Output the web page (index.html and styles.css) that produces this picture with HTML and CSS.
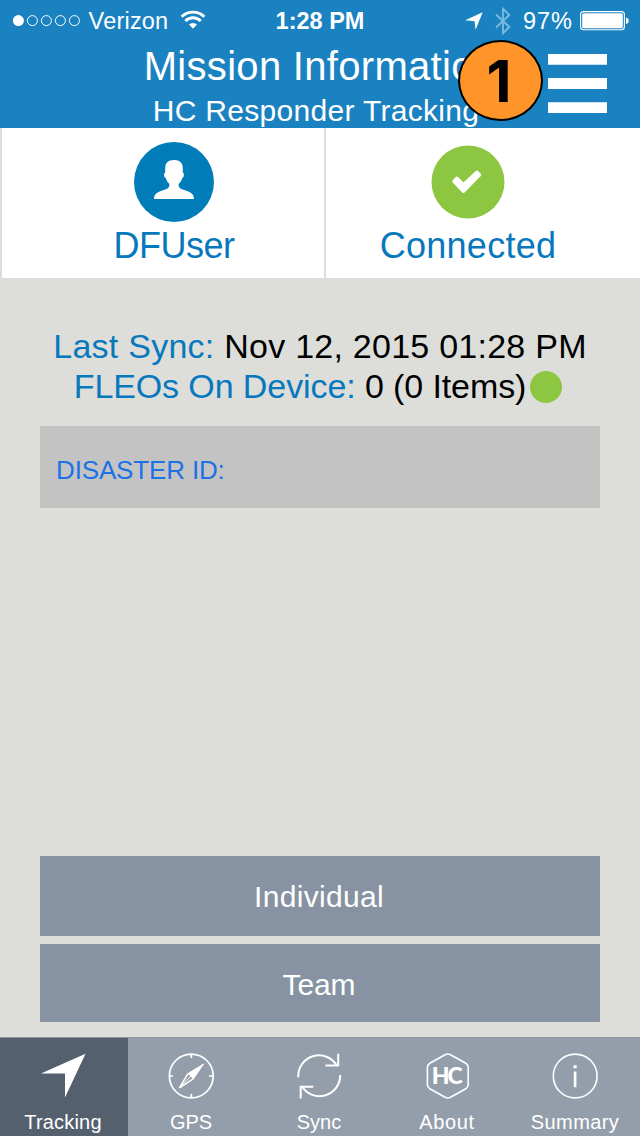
FILE: index.html
```html
<!DOCTYPE html>
<html lang="en">
<head>
<meta charset="utf-8">
<title>Mission Information</title>
<link rel="stylesheet" href="styles.css">
</head>
<body>
<div class="screen">
  <header class="header">
    <div class="status">
      <div class="status-left">
        <svg class="signal" width="70" height="14" viewBox="0 0 70 14"><circle cx="6.4" cy="6.600" r="5.5" fill="#fff"/><g fill="none" stroke="#fff" stroke-width="1"><circle cx="20.4" cy="6.600" r="5"/><circle cx="34.4" cy="6.600" r="5"/><circle cx="48.4" cy="6.600" r="5"/><circle cx="62.4" cy="6.600" r="5"/></g></svg>
        <span class="carrier">Verizon</span>
        <svg class="wifi" width="26" height="20" viewBox="0 0 26 20"><g fill="none" stroke="#fff" stroke-width="2.800"><path d="M1.6 6.800a16.2 16.2 0 0 1 22.8 0"/><path d="M5.3 11a10.800 10.800 0 0 1 15.400 0"/></g><path d="M13 18.800l-4-4.200a5.8 5.8 0 0 1 8 0z" fill="#fff"/></svg>
      </div>
      <span class="clock">1:28 PM</span>
      <div class="status-right">
        <svg class="arrow" width="18" height="18" viewBox="0 0 18 18"><path d="M17.7.3L.2 8.2l9.400 1 1 8.500z" fill="#fff"/></svg>
        <svg class="bluetooth" width="16" height="28" viewBox="0 0 16 28"><path d="M1 7.5L14.3 20 8 26.2V1.8L14.3 8 1 20.5" fill="none" stroke="#7ab8de" stroke-width="1.9"/></svg>
        <span class="percent">97%</span>
        <svg class="battery" width="50" height="20" viewBox="0 0 50 20"><rect x=".6" y=".6" width="43.8" height="18.2" rx="3" fill="none" stroke="#fff" stroke-width="1.1"/><rect x="2.2" y="2.2" width="40.6" height="15" rx="1.5" fill="#fff"/><path d="M46 6.5c3.7.8 3.7 5.7 0 6.5z" fill="#fff"/></svg>
      </div>
    </div>
    <h1 class="title">Mission Information</h1>
    <p class="subtitle">HC Responder Tracking</p>
    <svg class="menu" width="59" height="60" viewBox="0 0 59 60"><path d="M0 0h59v10.7H0zM0 24h59v11H0zM0 48.2h59v10.7H0z" fill="#fff"/></svg>
    <div class="badge">1</div>
  </header>

  <section class="cards">
    <div class="card card-user">
      <svg class="card-icon" width="80" height="80" viewBox="0 0 80 80"><circle cx="40" cy="40" r="40" fill="#007db8"/><path d="M40 18C34 18 31.200 21 31.200 26V30.500C29.500 31 29.800 35.500 31.800 36C32.400 38.500 33.500 40.300 35.200 41.800C35.800 44.500 35 46 32 47.200C26 49.500 20 50 20 57H60C60 50 54 49.500 48 47.200C45 46 44.200 44.500 44.800 41.800C46.500 40.300 47.600 38.500 48.200 36C50.200 35.500 50.500 31 48.800 30.500V26C48.800 21 46 18 40 18Z" fill="#fff"/></svg>
      <span class="card-label user-label">DFUser</span>
    </div>
    <div class="card card-link">
      <svg class="card-icon" width="80" height="80" viewBox="0 0 80 80"><circle cx="40" cy="40" r="36.500" fill="#8dc741"/><path d="M24.700 38.200l3.100-3.100q1.200-1 2.400 0l5.200 5.300L47.700 29q1.200-1 2.400 0l2.700 2.900q.9 1.100 0 2.200L36.600 50.400q-1.200 1-2.400 0L24.700 40.400q-.9-1.100 0-2.200z" fill="#fff"/></svg>
      <span class="card-label link-label">Connected</span>
    </div>
  </section>

  <main class="main">
    <div class="info sync"><span class="key">Last Sync:</span> Nov 12, 2015 01:28 PM</div>
    <div class="info device"><span class="key">FLEOs On Device:</span> 0 (0 Items)<i class="dot"></i></div>
    <div class="disaster">DISASTER ID:</div>
    <div class="actions">
      <button class="action individual">Individual</button>
      <button class="action team">Team</button>
    </div>
  </main>

  <nav class="tabs">
    <a class="tab active">
      <svg width="46" height="46" viewBox="0 0 46 46"><path d="M45.500 .8L1 20.600h24V44.500z" fill="#fff"/></svg>
      <span class="tracking">Tracking</span>
    </a>
    <a class="tab">
      <svg width="46" height="46" viewBox="0 0 46 46" fill="none" stroke="#fff" stroke-width="1.700"><circle cx="23.300" cy="23" r="21.900"/><path d="M23.300 1v4M23.300 41v4M1 23h4M41 23h4"/><path d="M35.500 11L20 20.500l5.600 5.200z" fill="#fff" stroke-width="1"/><path d="M20 20.500L11.500 34.800l14.100-9.100" stroke-width="1.500"/><path d="M11.500 34.800L23 23" stroke-width="1"/></svg>
      <span class="gps">GPS</span>
    </a>
    <a class="tab">
      <svg width="46" height="46" viewBox="0 0 46 46" fill="none" stroke="#fff" stroke-width="2"><path d="M2.300 24.300A20.700 20.700 0 0 1 40.800 12.500M44.200 22A20.700 20.700 0 0 1 6 33.500"/><path d="M42.200 .8v11.600H29.500M4.700 45.500V33.800H17.300"/></svg>
      <span class="sync-tab">Sync</span>
    </a>
    <a class="tab">
      <svg width="46" height="46" viewBox="0 0 46 46"><path d="M21.100 1.700q2.700-1.400 5.400 0l15.300 8.500q2.400 1.400 2.400 4v17.600q0 2.600-2.400 4l-15.300 8.500q-2.700 1.400-5.400 0L5.800 35.800q-2.400-1.400-2.400-4V14.200q0-2.600 2.400-4z" fill="none" stroke="#fff" stroke-width="1.600"/><text class="logo" x="7.700" y="31.400" textLength="31">HC</text></svg>
      <span class="about">About</span>
    </a>
    <a class="tab">
      <svg width="46" height="46" viewBox="0 0 46 46"><circle cx="23.200" cy="23" r="21.900" fill="none" stroke="#fff" stroke-width="1.600"/><path d="M21.500 12.200h3.200v3h-3.200zM21.800 18.500h2.600v15.700h-2.600z" fill="#fff"/></svg>
      <span class="summary">Summary</span>
    </a>
  </nav>
</div>
</body>
</html>
```
FILE: styles.css
```css
* { box-sizing: border-box; }
body {
  margin: 0;
  font-family: "Liberation Sans", Arial, sans-serif;
}
svg { display: block; flex: none; }
.screen {
  width: 640px;
  height: 1136px;
  display: flex;
  flex-direction: column;
  background: #dddeda;
  overflow: hidden;
}

/* Header */
.header {
  position: relative;
  height: 128px;
  flex: none;
  background: #1a82c1;
  color: #fff;
  text-align: center;
}
.status {
  display: grid;
  grid-template-columns: 1fr auto 1fr;
  height: 42px;
  font-size: 24px;
  line-height: 42px;
}
.status-left, .status-right { display: flex; align-items: flex-start; }
.status-left { padding-left: 12px; }
.status-right { justify-content: flex-end; padding-right: 10px; }
.signal { margin-top: 14px; }
.carrier { margin-left: 6px; width: 81px; font-size: 23.5px; letter-spacing: 0.2px; white-space: nowrap; }
.wifi { margin: 10px 0 0 10.5px; }
.clock { font-weight: bold; font-size: 23.5px; }
.arrow { margin: 12px 12px 0 0; }
.bluetooth { margin: 7px 12px 0 0; }
.percent { font-size: 23.5px; letter-spacing: 1px; margin-right: 7px; }
.battery { margin-top: 11px; }
.title {
  margin: 0;
  font-size: 40px;
  line-height: 49px;
  font-weight: normal;
  letter-spacing: 0.3px;
}
.subtitle {
  margin: 0;
  font-size: 30px;
  line-height: 40px;
  letter-spacing: 0.3px;
  padding-right: 8px;
}
.menu { position: absolute; left: 548px; top: 54px; }
.badge {
  position: absolute;
  left: 458px;
  top: 40px;
  width: 85px;
  height: 81px;
  border: 2px solid #000;
  border-radius: 50%;
  background: #ff9528;
  color: #000;
  font-family: Inter, "Liberation Sans", sans-serif;
  font-size: 58px;
  line-height: 78px;
  font-weight: bold;
  padding-right: 3px;
}

/* User and connection cards */
.cards {
  display: grid;
  grid-template-columns: 324px 1fr;
  height: 150px;
  flex: none;
}
.card {
  display: flex;
  flex-direction: column;
  align-items: center;
  padding-top: 14px;
  background: #fff;
  border-left: 2px solid #dddeda;
}
.card-user { padding-left: 22px; }
.card-link { padding-right: 30px; }
.card-label {
  color: #0878bd;
  font-size: 36px;
  line-height: 48px;
}
.user-label { letter-spacing: -0.5px; }
.link-label { letter-spacing: 0.25px; }

/* Main content */
.main {
  flex: 1;
  display: flex;
  flex-direction: column;
  padding: 48px 40px 15px;
}
.info {
  display: flex;
  justify-content: center;
  font-size: 34px;
  line-height: 40px;
  white-space: pre;
  color: #000;
}
.key { color: #0878bd; }
.sync { letter-spacing: 0.25px; }
.device { letter-spacing: -0.1px; }
.dot {
  width: 32px;
  height: 32px;
  margin: 5px 4px 0;
  border-radius: 50%;
  background: #8dc741;
}
.disaster {
  height: 82px;
  margin-top: 20px;
  padding: 3px 16px 0;
  background: #c3c3c3;
  color: #1b72e8;
  font-size: 26px;
  line-height: 82px;
  letter-spacing: -0.15px;
}
.actions {
  margin-top: auto;
  display: flex;
  flex-direction: column;
  gap: 8px;
}
.action {
  height: 80px;
  padding: 2px 2px 0 0;
  border: 0;
  background: #8793a2;
  color: #fff;
  font: 30px/40px "Liberation Sans", Arial, sans-serif;
}
.individual { letter-spacing: 0.3px; }
.team { height: 78px; padding-top: 4px; letter-spacing: -0.1px; }

/* Bottom tabs */
.tabs {
  display: grid;
  grid-template-columns: repeat(5, 1fr);
  height: 99px;
  flex: none;
  background: #949eaa;
  border-top: 1px solid #8b969f;
}
.tab {
  display: flex;
  flex-direction: column;
  align-items: center;
  padding: 15px 2px 0 0;
  color: #fff;
  font-size: 20px;
  line-height: 24px;
}
.tab svg { margin-bottom: 11px; overflow: visible; }
.tab.active { background: #55606e; }
.tracking { letter-spacing: 0.2px; }
.about { letter-spacing: 0.6px; }
.summary { letter-spacing: 0.4px; }
.logo {
  font: 900 23px Lato, sans-serif;
  fill: #fff;
}
```
